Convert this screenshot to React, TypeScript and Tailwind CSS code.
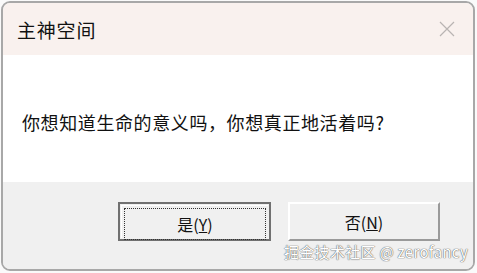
import React from "react";

function CloseIcon() {
  return (
    <svg width="16" height="16" viewBox="0 0 16 16" className="block">
      <path d="M1 1 L15 15 M15 1 L1 15" stroke="#b9b4b2" strokeWidth="1.2" fill="none" />
    </svg>
  );
}

export default function App() {
  const cjk = { fontFamily: '"Noto Sans CJK SC", "Noto Sans", sans-serif' };
  return (
    <div className="relative w-[477px] h-[273px] bg-[#fafafa] overflow-hidden" style={cjk}>
      <div className="ml-[1px] mt-[1px] w-[474px] h-[270px] border-2 border-[#a8a8a8] rounded-[9px] overflow-hidden flex flex-col">
        <div className="h-[52px] bg-[#f9f1ee] flex items-center justify-between pl-[14px] pr-[18px]">
          <span className="text-[19px] leading-none text-[#111] tracking-[0.8px]">主神空间</span>
          <CloseIcon />
        </div>
        <div className="h-[127px] bg-white flex items-center pl-[19px] pt-[6px]">
          <span className="text-[18px] leading-none text-[#111] tracking-[0.6px]">
            你想知道生命的意义吗，你想真正地活着吗?
          </span>
        </div>
        <div className="flex-1 bg-[#f0f0f0] flex gap-[17px] pl-[115px] pt-[20px]">
          <div className="w-[153px] h-[39px] border-2 border-[#707070] bg-[#f0f0f0] p-[1px]">
            <div className="h-full border-t border-l border-white">
              <div className="h-full m-[2px] border border-dotted border-[#333] flex items-center justify-center text-[16px] text-[#111]">
                是(<span className="underline">Y</span>)
              </div>
            </div>
          </div>
          <div className="w-[152px] h-[39px] border-t-2 border-l-2 border-white border-r-2 border-b-2 border-r-[#9a9a9a] border-b-[#9a9a9a] bg-[#f0f0f0] flex items-center justify-center text-[16px] text-[#111]">
            否(<span className="underline">N</span>)
          </div>
        </div>
      </div>
      <div
        className="absolute left-[284px] top-[244px] text-[15px] leading-none text-white tracking-[0.3px]"
        style={{ textShadow: "0 0 1px #555, 0 0 1px #555" }}
      >
        掘金技术社区 @ zerofancy
      </div>
    </div>
  );
}
